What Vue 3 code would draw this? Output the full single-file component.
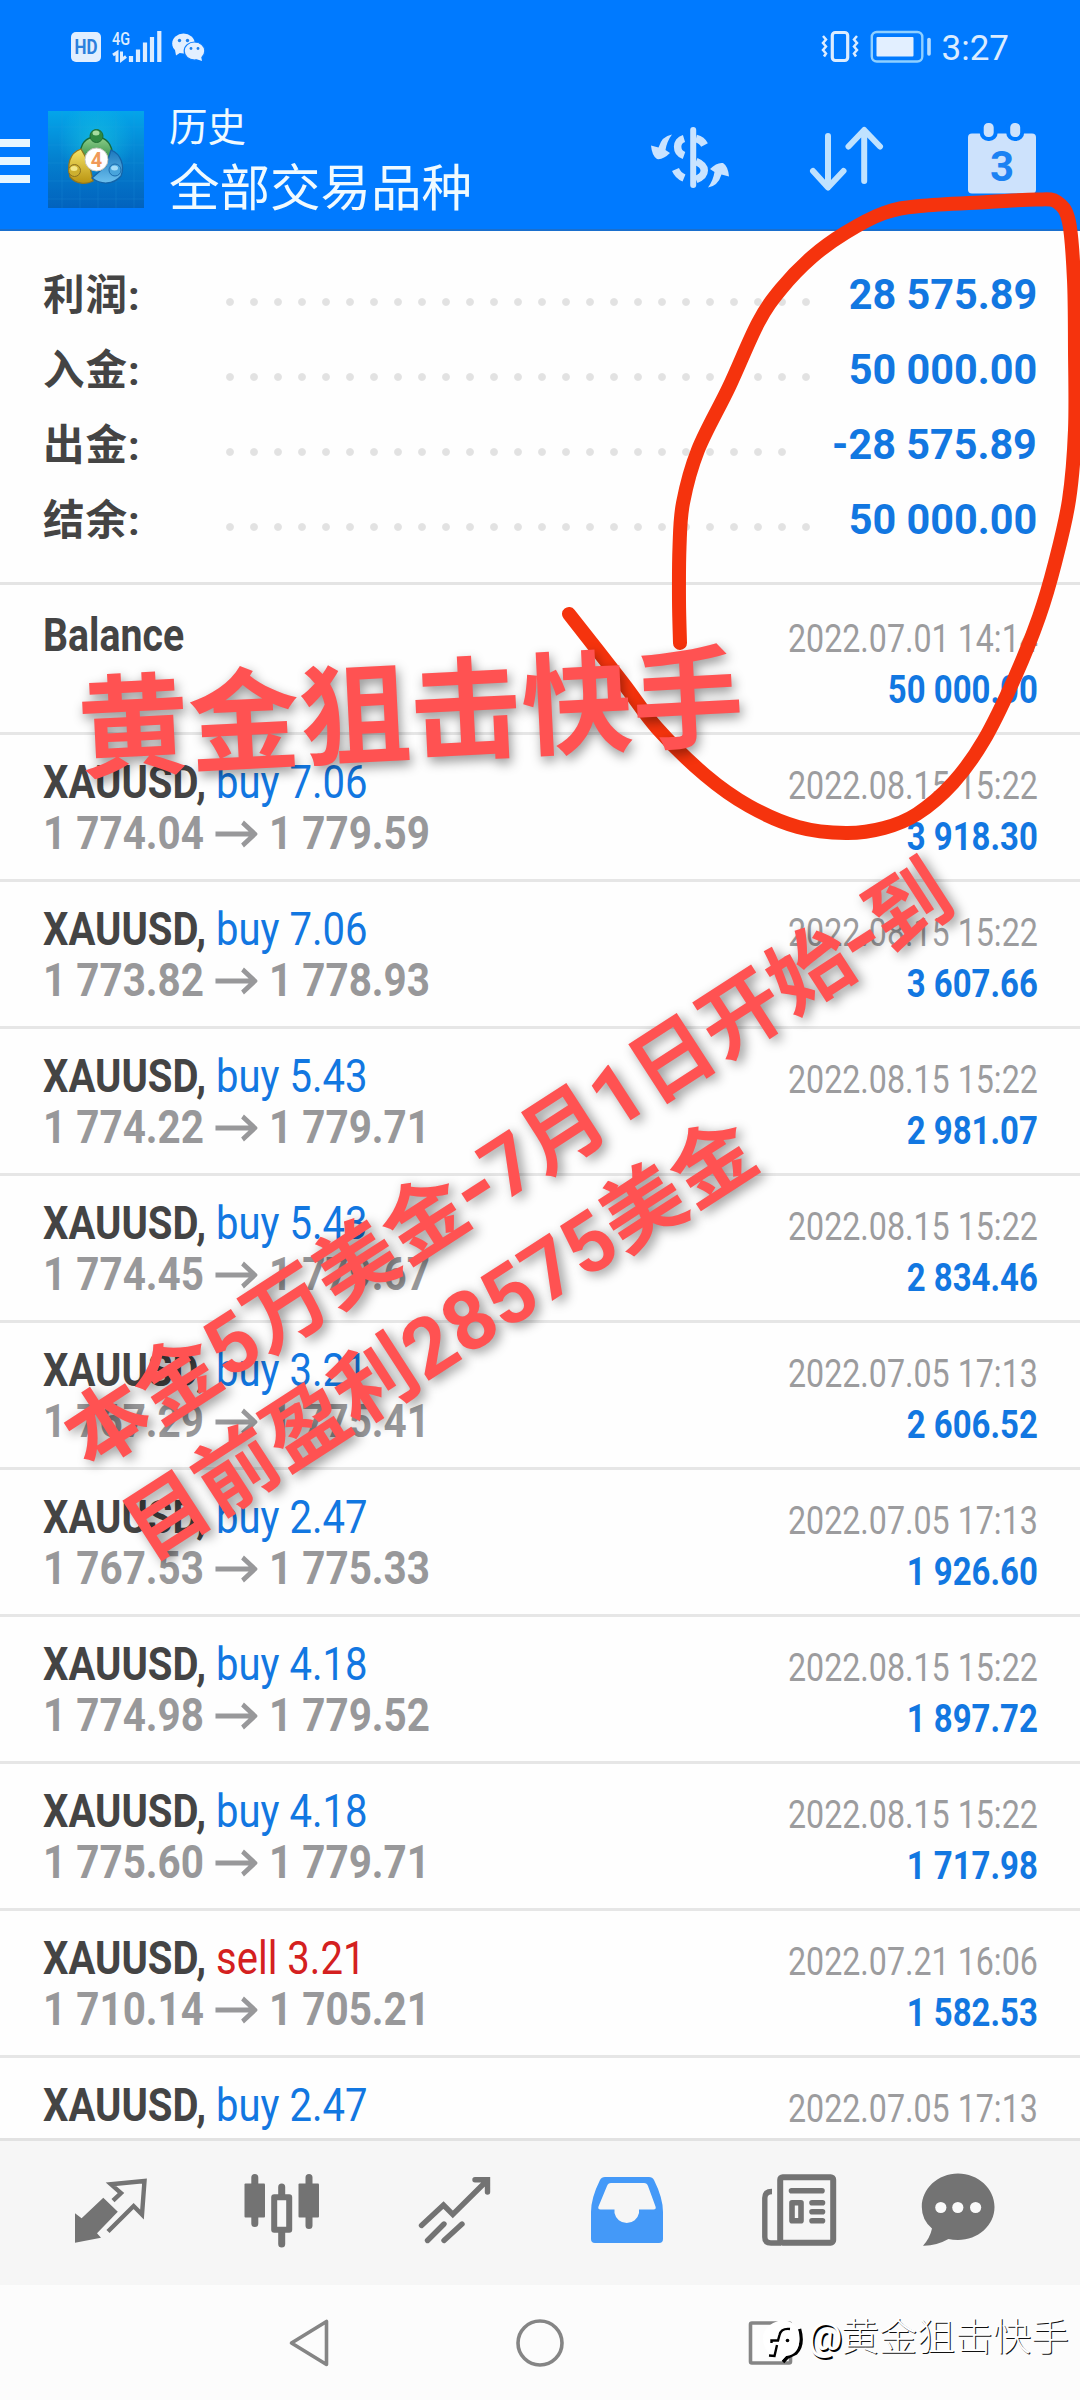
<script setup>
const summary = [
  { label: '利润:', value: '28 575.89', dots: 25 },
  { label: '入金:', value: '50 000.00', dots: 25 },
  { label: '出金:', value: '-28 575.89', dots: 24 },
  { label: '结余:', value: '50 000.00', dots: 25 },
]

const deals = [
  { side: 'buy', volume: '7.06', from: '1 774.04', to: '1 779.59', date: '2022.08.15 15:22', profit: '3 918.30' },
  { side: 'buy', volume: '7.06', from: '1 773.82', to: '1 778.93', date: '2022.08.15 15:22', profit: '3 607.66' },
  { side: 'buy', volume: '5.43', from: '1 774.22', to: '1 779.71', date: '2022.08.15 15:22', profit: '2 981.07' },
  { side: 'buy', volume: '5.43', from: '1 774.45', to: '1 779.67', date: '2022.08.15 15:22', profit: '2 834.46' },
  { side: 'buy', volume: '3.21', from: '1 767.29', to: '1 775.41', date: '2022.07.05 17:13', profit: '2 606.52' },
  { side: 'buy', volume: '2.47', from: '1 767.53', to: '1 775.33', date: '2022.07.05 17:13', profit: '1 926.60' },
  { side: 'buy', volume: '4.18', from: '1 774.98', to: '1 779.52', date: '2022.08.15 15:22', profit: '1 897.72' },
  { side: 'buy', volume: '4.18', from: '1 775.60', to: '1 779.71', date: '2022.08.15 15:22', profit: '1 717.98' },
  { side: 'sell', volume: '3.21', from: '1 710.14', to: '1 705.21', date: '2022.07.21 16:06', profit: '1 582.53' },
  { side: 'buy', volume: '2.47', from: '', to: '', date: '2022.07.05 17:13', profit: '' },
]

// Freehand marker stroke, smoothed with a Catmull-Rom spline.
const strokePoints = [
  [680, 643], [679, 600], [679.5, 547], [683, 503], [698, 450], [729, 387], [758, 323], [781, 289],
  [812, 257], [845, 233], [884, 213], [920, 206], [988, 202], [1036, 199.5], [1057, 202], [1069, 222],
  [1074, 280], [1075, 350], [1075, 430], [1069, 500], [1055, 563], [1039, 617], [1015, 677], [984, 740],
  [953, 783], [917, 814], [884, 828], [846, 833], [798, 827], [749, 806], [705, 775], [657, 728],
  [623, 683], [569, 614],
]
const strokePath = strokePoints.reduce((d, p, i, a) => {
  if (i === 0) return `M${p[0]} ${p[1]}`
  const p0 = a[Math.max(i - 2, 0)]
  const p1 = a[i - 1]
  const p3 = a[Math.min(i + 1, a.length - 1)]
  const c1 = [p1[0] + (p[0] - p0[0]) / 6, p1[1] + (p[1] - p0[1]) / 6]
  const c2 = [p[0] - (p3[0] - p1[0]) / 6, p[1] - (p3[1] - p1[1]) / 6]
  return `${d} C${c1.join(' ')} ${c2.join(' ')} ${p.join(' ')}`
}, '')
</script>

<template>
  <div class="screen">
    <header class="top">
      <div class="status">
        <svg class="status-left" width="140" height="52" viewBox="70 21 140 52">
          <rect x="71" y="32" width="30" height="30" rx="5" fill="#e2efff" />
          <text x="86" y="54" font-size="20" font-weight="700" text-anchor="middle" textLength="23" lengthAdjust="spacingAndGlyphs" fill="#2c80dd">HD</text>
          <text x="112" y="45" font-size="19" font-weight="500" textLength="18" lengthAdjust="spacingAndGlyphs" fill="#dcecff">4G</text>
          <path d="M113 55L117 52.5V62M121.500 51.500V60L126 56.500" fill="none" stroke="#dcecff" stroke-width="3" />
          <g stroke="#dcecff" stroke-width="4.200">
            <path d="M131 62v-6M138 62V49.500M145 62V42.500M152 62V37M159.300 62V31" />
          </g>
          <ellipse cx="183.500" cy="43.500" rx="11.300" ry="10" fill="#e2efff" />
          <path d="M175 50l1 5.500 6-4z" fill="#e2efff" />
          <ellipse cx="194.500" cy="51" rx="10.300" ry="9" fill="#e2efff" stroke="#1080ff" stroke-width="1.200" />
          <path d="M196 59l6 2-1-5z" fill="#e2efff" />
          <g fill="#1c80ee">
            <circle cx="179.500" cy="40.500" r="1.700" /><circle cx="187.500" cy="40.500" r="1.700" />
            <circle cx="191" cy="48.500" r="1.400" /><circle cx="198" cy="48.500" r="1.400" />
          </g>
        </svg>
        <div class="status-right">
          <svg width="112" height="36" viewBox="821 29 112 36" fill="none" stroke="#dcecff">
            <rect x="833.300" y="32.500" width="15.400" height="28" rx="3" stroke-width="3.200" />
            <path d="M824 36l3 3.500-3 3.500 3 3.500-3 3.500 3 3.500-2 3M858 36l-3 3.500 3 3.500-3 3.500 3 3.500-3 3.500 2 3" stroke-width="2.500" />
            <rect x="872.800" y="32" width="50.500" height="29.500" rx="5" stroke="#8fd0ff" stroke-width="2.400" />
            <rect x="877.500" y="37" width="37" height="19.500" rx="1" fill="#e2efff" stroke="none" />
            <path d="M930 39.500v14.500" stroke-width="3.600" stroke-linecap="round" stroke="#b5dcff" />
          </svg>
          <span class="clock">3:27</span>
        </div>
      </div>
      <div class="appbar">
        <div class="menu"><i></i><i></i><i></i></div>
        <svg class="logo" width="96" height="97" viewBox="0 0 96 97">
          <defs>
            <linearGradient id="sky" x1="0" y1="0" x2="0" y2="1">
              <stop offset="0" stop-color="#04a5ea" /><stop offset=".5" stop-color="#0480cf" /><stop offset="1" stop-color="#0262bd" />
            </linearGradient>
            <radialGradient id="glow"><stop offset="0" stop-color="#19cce0" stop-opacity=".6" /><stop offset="1" stop-color="#19cce0" stop-opacity="0" /></radialGradient>
            <linearGradient id="green" x1="0" y1="0" x2="0" y2="1"><stop offset="0" stop-color="#8fd08a" /><stop offset="1" stop-color="#1c7c38" /></linearGradient>
            <linearGradient id="gold" x1="0" y1="0" x2="0" y2="1"><stop offset="0" stop-color="#f5e468" /><stop offset="1" stop-color="#b99310" /></linearGradient>
            <linearGradient id="aqua" x1="0" y1="0" x2="0" y2="1"><stop offset="0" stop-color="#1c78bd" /><stop offset="1" stop-color="#6cc0ee" /></linearGradient>
          </defs>
          <rect width="96" height="97" fill="url(#sky)" />
          <path d="M14 0v97M32 0v97M50 0v97M68 0v97M86 0v97M0 16h96M0 34h96M0 52h96M0 70h96M0 88h96" stroke="#2aa0e0" stroke-width=".6" opacity=".35" />
          <circle cx="48" cy="30" r="38" fill="url(#glow)" />
          <path d="M32 46C32 32 38 26 48 26s16 6 17 20l-8 8H38z" fill="url(#green)" stroke="#176b3a" stroke-width="1.300" />
          <path d="M33 38C21 42 19 54 22 66c6 7 16 8 23 4l-4-18z" fill="url(#gold)" stroke="#8f7620" stroke-width="1.300" />
          <path d="M63 39c10 4 14 16 10 26-8 9-20 9-29 2l14-12z" fill="url(#aqua)" stroke="#1464a8" stroke-width="1.300" />
          <circle cx="48.500" cy="25" r="6.500" fill="#2f8a42" stroke="#1f6d33" />
          <ellipse cx="48" cy="22" rx="3.500" ry="2.500" fill="#a5dc9f" />
          <circle cx="26.500" cy="59.500" r="6" fill="#cdb030" stroke="#8b7120" />
          <ellipse cx="26" cy="57.500" rx="3.500" ry="2.500" fill="#f3e788" />
          <circle cx="67" cy="59" r="6" fill="#48a4dc" stroke="#1c6cae" />
          <ellipse cx="66.500" cy="57" rx="3.500" ry="2.500" fill="#a5dcf8" />
          <circle cx="48.500" cy="48.500" r="11.500" fill="#fff" stroke="#c5c5bc" />
          <text x="48.500" y="55.500" font-size="20" font-weight="700" text-anchor="middle" fill="#f09a58">4</text>
        </svg>
        <div class="titles">
          <div class="title">历史</div>
          <div class="subtitle">全部交易品种</div>
        </div>
        <svg class="act-money" width="80" height="66" viewBox="0 0 80 66" fill="none" stroke="#c9e3ff">
          <path d="M43.200 5v55" stroke-width="6" stroke-linecap="round" />
          <path d="M34 13.500C25.500 16 25.500 27.500 34 30.500M46 13.500Q52 15 54.500 20M46 36.500C57 41 57 50 46 54.500M25.500 44.500Q28 50.500 34 53" stroke-width="7.500" />
          <g fill="#c9e3ff" stroke="none">
            <path d="M22 9.500Q12 11 8.500 22.500L1 20.500Q2 31 7 34Q13 35 20 28L15.500 25Q17 16 22 9.500z" />
            <path transform="rotate(180 40 36)" d="M22 9.500Q12 11 8.500 22.500L1 20.500Q2 31 7 34Q13 35 20 28L15.500 25Q17 16 22 9.500z" />
          </g>
        </svg>
        <svg class="act-sort" width="76" height="68" viewBox="0 0 76 68" fill="none" stroke="#bfe2ff" stroke-width="6" stroke-linecap="round" stroke-linejoin="round">
          <path d="M19 11v50M4 46l15 16.500L34.500 46M55.200 56V6M39.500 21.500L55.200 5 71 21.500" />
        </svg>
        <svg class="act-cal" width="72" height="73" viewBox="0 0 72 73">
          <rect x="2" y="12.500" width="68" height="60" rx="4" fill="#cde2fc" />
          <g fill="#cde2fc" stroke="#007aff" stroke-width="4"><rect x="15.700" y="0" width="14" height="18" rx="6.500" /><rect x="42.200" y="0" width="14" height="18" rx="6.500" /></g>
          <text x="36" y="59.500" font-size="42" font-weight="700" text-anchor="middle" fill="#1c82f3">3</text>
        </svg>
      </div>
    </header>

    <section class="summary">
      <div v-for="s in summary" :key="s.label" class="sum-row">
        <span class="sum-label">{{ s.label }}</span>
        <span class="leader" :style="{ width: s.dots * 24 + 'px' }"></span>
        <span class="sum-value">{{ s.value }}</span>
      </div>
    </section>

    <main class="list">
      <div class="row first">
        <div class="left"><div class="name balance">Balance</div></div>
        <div class="right">
          <div class="date">2022.07.01 14:14</div>
          <div class="profit">50 000.00</div>
        </div>
      </div>
      <div v-for="(d, i) in deals" :key="i" class="row">
        <div class="left">
          <div class="name">XAUUSD, <span :class="d.side">{{ d.side }} {{ d.volume }}</span></div>
          <div v-if="d.from" class="prices">
            <span>{{ d.from }}</span>
            <svg width="48" height="30" viewBox="0 0 48 30" fill="none" stroke="#98989a" stroke-width="5"><path d="M0 15h45M31 3.500L45 15 31 26.500" /></svg>
            <span>{{ d.to }}</span>
          </div>
        </div>
        <div class="right">
          <div class="date">{{ d.date }}</div>
          <div class="profit">{{ d.profit }}</div>
        </div>
      </div>
    </main>

    <nav class="tabs">
      <svg viewBox="0 0 80 80">
        <path d="M5 43.300V72.700L31 67.700 27 63.300 47.800 41.700 33.300 27.700 11.600 48.300z" fill="#737373" />
        <path d="M43 30.700L51 23 41 14.300 74.500 11 72 44.500 63.600 36 38 61.500" fill="none" stroke="#737373" stroke-width="4.400" />
      </svg>
      <svg viewBox="0 0 80 80" fill="#737373" stroke="#737373">
        <path d="M12.800 7.500v46M39.700 17v8M39.700 62v12M67 7.500v48" stroke-width="7" stroke-linecap="round" />
        <rect x="2.500" y="13.500" width="20.500" height="34" rx="1" stroke="none" /><rect x="56.500" y="13.500" width="20.500" height="34" rx="1" stroke="none" />
        <rect x="32.200" y="27.200" width="15" height="32.500" fill="#f7f7f7" stroke-width="6" stroke-linejoin="round" />
      </svg>
      <svg viewBox="0 0 80 80" fill="none" stroke="#737373" stroke-width="5.400" stroke-linecap="round">
        <path d="M6.500 55.500L28.500 35l9.300 9.500L71 11.500M60 9.800h12.500V22M29 54L12.500 70.500M47 54L29 70.500" />
      </svg>
      <svg viewBox="0 0 80 80" fill="#4499f8">
        <path fill-rule="evenodd" d="M18 7H62Q65.500 7 67 10Q76 28 76 42V69Q76 73 72 73H8Q4 73 4 69V42Q4 28 13 10Q14.500 7 18 7zM24 13Q21 13 20 16L11.500 36.500Q10.500 39.500 13.500 39.500H27.500V43A12.500 12.500 0 0 0 52 43V39.500H66.500Q69.500 39.500 68.500 36.500L61 16Q60 13 57 13z" />
      </svg>
      <svg viewBox="0 0 80 80" fill="none" stroke="#737373">
        <rect x="21.200" y="7.200" width="53" height="65.500" rx="2.500" stroke-width="6" />
        <path d="M13 21.500Q5.800 21.500 5.800 28V67Q5.800 73 12 73H22" stroke-width="5.400" />
        <path d="M32.500 20.700h30.500M53 32.700h10.500M53 41.700h10.500M53 50.700h10.500" stroke-width="5.600" stroke-linecap="round" />
        <rect x="33" y="32.800" width="9" height="18" stroke-width="5.600" stroke-linejoin="round" />
      </svg>
      <svg viewBox="0 0 80 80" fill="#737373">
        <path d="M40 3.500C60 3.500 76.500 18.500 76.500 37S60 70 40 70Q34.500 70 30.500 69Q18 76 5 75.700Q12 68 14 58.500Q3.800 50 3.800 37C3.800 18.500 20 3.500 40 3.500z" />
        <g fill="#fafafa"><circle cx="22.800" cy="37.500" r="5.600" /><circle cx="39.800" cy="37.500" r="5.600" /><circle cx="57.600" cy="37.500" r="5.600" /></g>
      </svg>
    </nav>

    <div class="sysnav">
      <svg width="56" height="56" viewBox="0 0 56 56"><path d="M10.500 28L45.500 6.500V49.500z" /></svg>
      <svg width="56" height="56" viewBox="0 0 56 56"><circle cx="28" cy="28" r="22" /></svg>
      <svg width="56" height="56" viewBox="0 0 56 56"><rect x="7.500" y="8" width="40" height="40" rx="1.500" /></svg>
    </div>

    <svg class="marker" width="1080" height="2400" viewBox="0 0 1080 2400"><path :d="strokePath" /></svg>
    <div class="stamp one">黄金狙击快手</div>
    <div class="stamp two">本金5万美金<b>-</b>7月1日开始<b>-</b>到<br />目前盈利28575美金</div>

    <div class="credit">
      <svg width="42" height="48" viewBox="0 0 42 48">
        <path d="M37.500 10Q42 26 34 34L25 38.500 21 43" fill="none" stroke="#000" stroke-width="3.500" />
        <path d="M19 1Q37.500 2 37.500 19T24 37L19 42Q17 38 11 37Q1 32 1 19T19 1z" fill="#fff" />
        <path d="M28 10Q19 9 17.500 16L16 21.500H9.500V24M15 26L12.500 37 7 36.500" fill="none" stroke="#000" stroke-width="2.400" />
        <circle cx="25.500" cy="21.500" r="1.800" fill="#000" />
      </svg>
      <span><b>@</b>黄金狙击快手</span>
    </div>
  </div>
</template>

<style>
body { margin: 0; }
</style>

<style scoped>
.screen {
  position: relative;
  width: 1080px;
  height: 2400px;
  overflow: hidden;
  display: flex;
  flex-direction: column;
  background: #fefefe;
  font-family: Roboto, "Noto Sans CJK SC", sans-serif;
}
.top { height: 231px; box-sizing: border-box; background: #007aff; border-bottom: 2px solid #1a6fce; flex: none; }
.status { height: 93px; display: flex; justify-content: space-between; align-items: center; padding: 0 71px 0 70px; }
.status-right { display: flex; align-items: center; gap: 10px; }
.clock { font-size: 35px; line-height: 40px; color: #dcecff; padding-top: 4px; }
.appbar { display: flex; align-items: flex-start; }
.menu { width: 30px; margin: 46px 18px 0 0; display: flex; flex-direction: column; gap: 10px; }
.menu i { height: 8px; background: #e8f6ff; }
.logo { margin-top: 18px; }
.titles { margin-left: 25px; width: 480px; color: #f0faff; }
.title { margin-top: 15px; font-size: 38.5px; line-height: 40px; font-weight: 400; }
.subtitle { margin-top: 11px; font-size: 50.5px; line-height: 60px; white-space: nowrap; }
.act-money { margin: 32px 79px 0 1px; }
.act-sort { margin: 32px 81px 0 0; }
.act-cal { margin-top: 28px; }

.summary { height: 354px; box-sizing: border-box; padding: 26px 43px 0; border-bottom: 3px solid #e4e4e4; flex: none; }
.sum-row { height: 75px; display: flex; align-items: center; }
.sum-label { width: 175px; font-size: 41.5px; letter-spacing: 1px; font-weight: 700; color: #444; line-height: 60px; padding-top: 3px; }
.leader { height: 24px; margin-top: 14px; background: radial-gradient(circle at 12px 12px, #e2e2e2 3.4px, transparent 4.4px) 0 0 / 24px 24px; }
.sum-value { margin-left: auto; font-size: 42px; font-weight: 700; color: #1277e1; white-space: nowrap; transform: scaleX(.985); transform-origin: 100% 50%; }

.list { flex: 1; overflow: hidden; }
.row { height: 147px; box-sizing: border-box; border-bottom: 3px solid #e6e6e6; padding: 21px 43px 0; display: flex; justify-content: space-between; }
.row.first { height: 150px; padding-top: 24px; }
.left > div { line-height: 51px; white-space: nowrap; transform-origin: 0 50%; }
.right { padding-top: 4px; margin-right: -1px; text-align: right; }
.right > div { line-height: 51px; white-space: nowrap; transform-origin: 100% 50%; }
.name { font-size: 47px; font-weight: 700; color: #444; transform: scaleX(.852); }
.name.balance { transform: scaleX(.835); }
.name span { font-weight: 400; }
.buy { color: #1277e1; }
.sell { color: #d42020; }
.prices { display: flex; align-items: center; gap: 13px; font-size: 46px; font-weight: 700; color: #98989a; transform: scaleX(.879); padding-top: 1px; }
.date { font-size: 38.5px; color: #9c9c9e; transform: scaleX(.836); }
.profit { font-size: 39px; font-weight: 700; color: #1277e1; transform: scaleX(.845); padding-top: 1px; }

.tabs { height: 147px; box-sizing: border-box; flex: none; border-top: 3px solid #e2e2e2; background: #f6f6f6; display: flex; gap: 92.250px; padding: 29px 0 0 70px; }
.tabs svg { width: 80px; height: 80px; flex: none; }
.tabs svg:last-child { margin-left: -13px; }

.sysnav { height: 115px; flex: none; background: #fcfcfc; display: flex; gap: 175px; padding-left: 281px; }
.sysnav svg { margin-top: 30px; fill: none; stroke: #858585; stroke-width: 3.600; stroke-linejoin: round; }

.marker { position: absolute; left: 0; top: 0; }
.marker path { fill: none; stroke: #f5330d; stroke-width: 14; stroke-linecap: round; stroke-linejoin: round; }
.stamp { position: absolute; color: #ff5252; font-weight: 700; white-space: nowrap; text-shadow: 2px 5px 12px rgba(0, 0, 0, .42); }
.stamp b { display: inline-block; margin: 0 -1.200px; transform: scaleX(1.150); }
.stamp.one { left: 78px; top: 664px; font-size: 111px; line-height: 130px; transform-origin: 56px 65px; transform: rotate(-2.870deg); }
.stamp.two { left: 67px; top: 1370px; font-size: 82.500px; line-height: 109px; transform-origin: 41px 54.500px; transform: rotate(-32.900deg); }

.credit { position: absolute; left: 762px; top: 2319px; display: flex; align-items: flex-start; gap: 4px; }
.credit span { margin-top: -2px; font-size: 38px; line-height: 40px; font-weight: 300; color: #fff; text-shadow: 1px 1px 0 #111; white-space: nowrap; }
.credit b { font-weight: 500; text-shadow: 1.500px 1.500px 0 #000; margin-right: -1px; }
</style>
